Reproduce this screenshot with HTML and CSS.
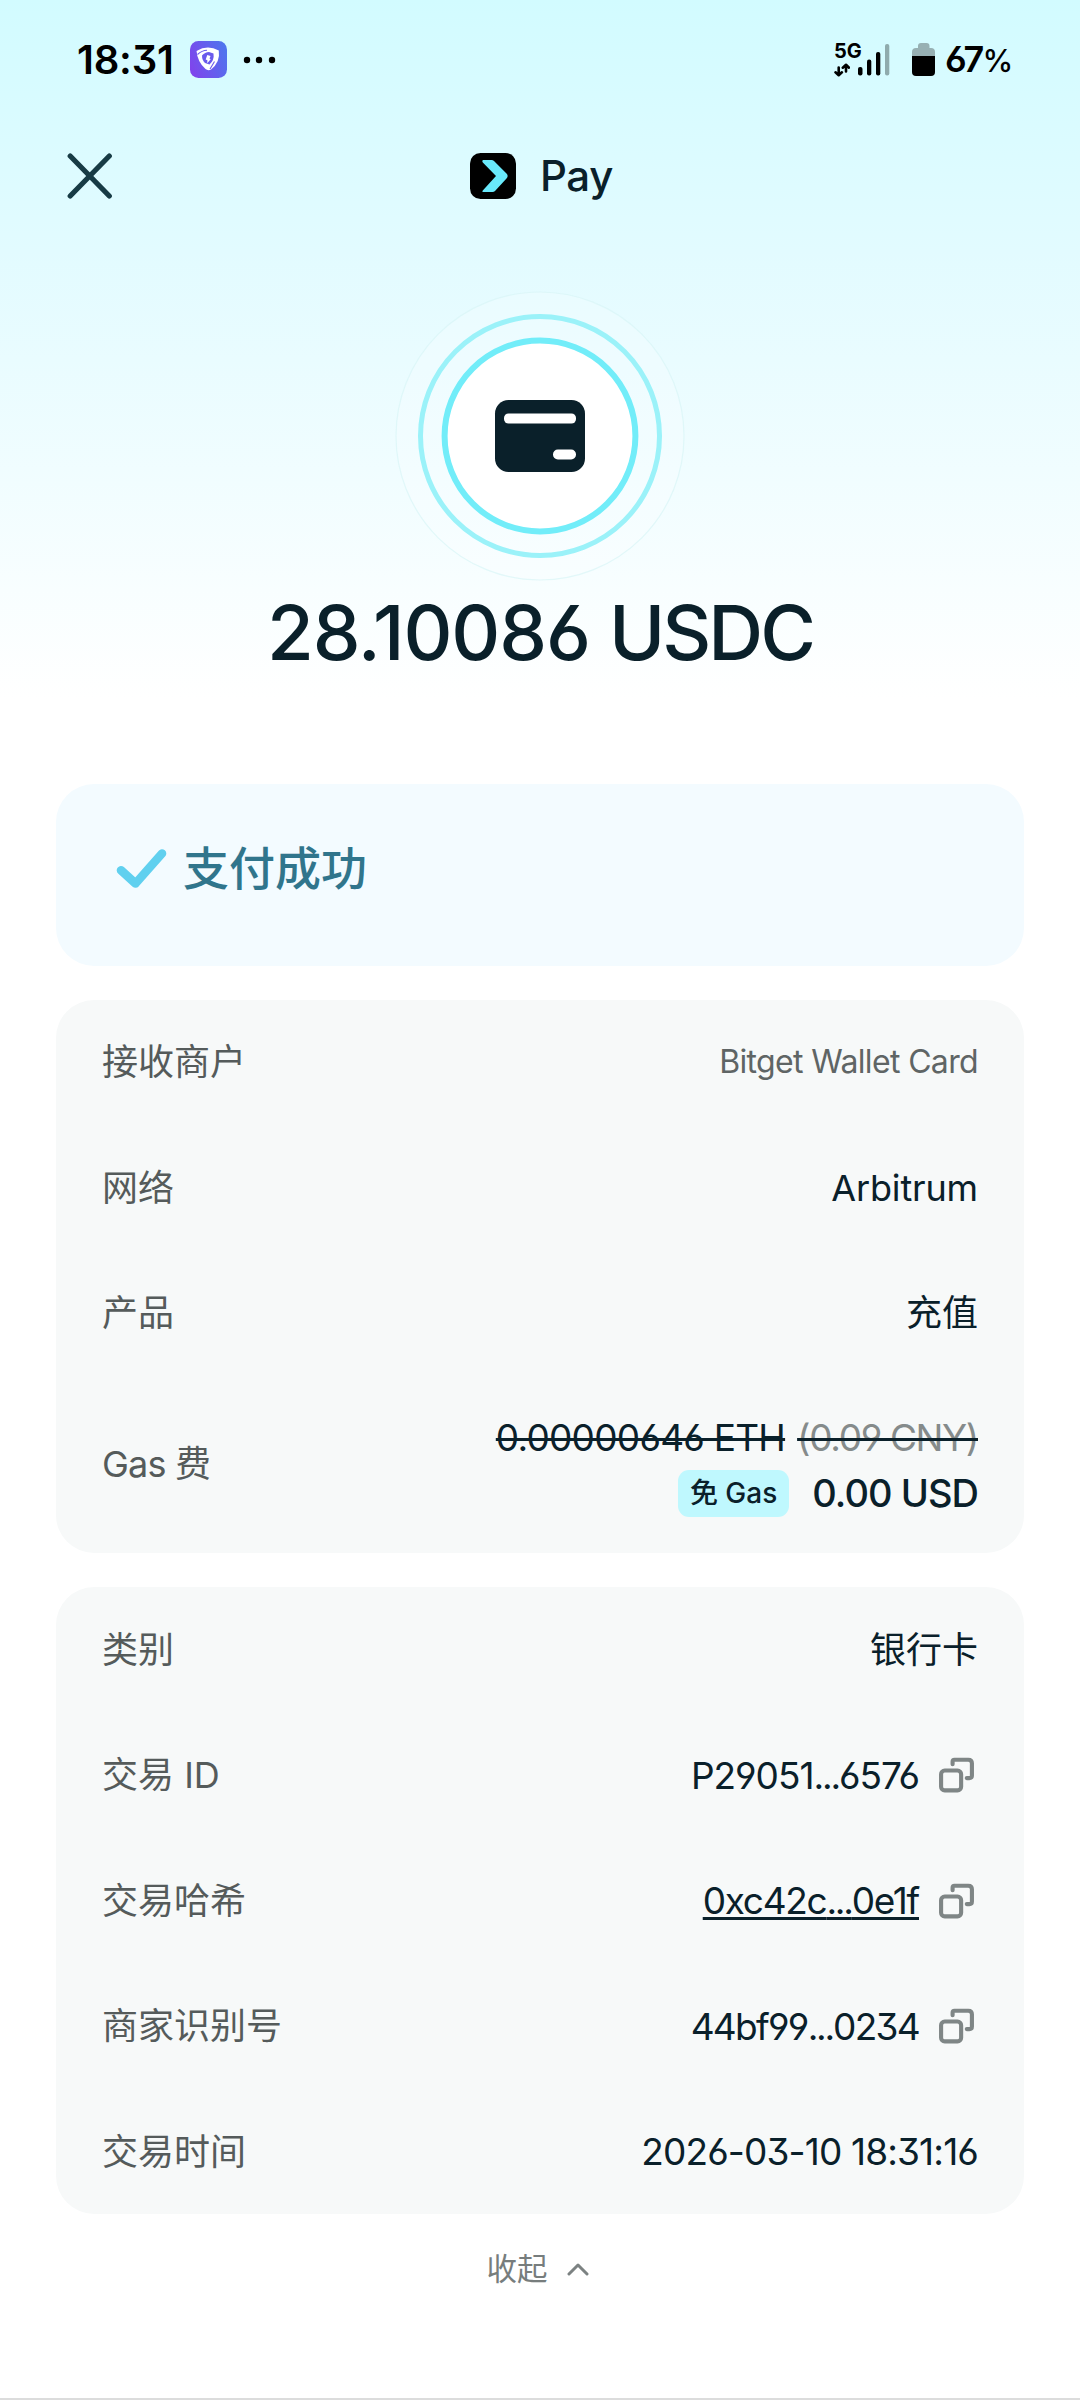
FILE: index.html
```html
<!DOCTYPE html>
<html lang="zh-CN">
<head>
<meta charset="utf-8">
<title>Pay</title>
<link rel="stylesheet" href="styles.css">
</head>
<body>
<svg class="defs" width="0" height="0" aria-hidden="true">
  <symbol id="copy" viewBox="0 0 36 36" fill="none" stroke="#7f8686" stroke-width="4" stroke-linecap="round" stroke-linejoin="round">
    <rect x="3" y="13.2" width="19.5" height="19.3" rx="3.5"/>
    <path d="M14.2 7V4.5Q14.2 2.7 16 2.7H29.5Q33 2.7 33 6.2V18Q33 20.5 30.5 20.5H28"/>
  </symbol>
</svg>
<div class="screen">
  <div class="statusbar">
    <div class="status-left">
      <span class="time">18:31</span>
      <svg class="app-badge" width="37" height="37" viewBox="0 0 37 37">
        <defs><linearGradient id="purple" x1="0" y1=".7" x2="1" y2=".3"><stop offset="0" stop-color="#7f45ec"/><stop offset="1" stop-color="#4f74ee"/></linearGradient></defs>
        <rect width="37" height="37" rx="8.5" fill="url(#purple)"/>
        <path d="M6.500 10Q17.500 3.500 28.800 9.500Q30.500 21 21 28.500Q18 30 15.500 28Q7.500 21 6.500 10Z" fill="#fff"/>
        <path d="M12 14.500Q15 11 19 11L23.500 12.500Q24.500 19 19.500 23.500L15 22Q12 19 12 14.500Z" fill="#6a5aec"/>
        <path d="M17.300 14l3.200 1-1 2.500 1.200.7-3.500 4 .2-3-1.700-.7z" fill="#fff"/>
        <path d="M7.500 13.500Q12 9.500 17 9.300M20 28L24.500 20.500" fill="none" stroke="#6b5bed" stroke-width="1.100"/>
      </svg>
      <svg class="more" width="34" height="8" viewBox="0 0 34 8"><circle cx="4" cy="4" r="3.200"/><circle cx="16" cy="4" r="3.200"/><circle cx="29" cy="4" r="3.200"/></svg>
    </div>
    <div class="status-right">
      <div class="network">
        <span class="net-type">5G</span>
        <svg width="16" height="14" viewBox="0 0 16 14" fill="none" stroke="#000" stroke-width="2.600" stroke-linecap="round" stroke-linejoin="round"><path d="M4.700 4.500V12M1.500 9.300L4.700 12.200L7.900 9.300M12 8.500V2M8.800 4.700L12 1.800L15 4.700"/></svg>
      </div>
      <svg class="signal" width="32" height="32" viewBox="0 0 32 32"><rect y="23" width="4.500" height="8.500" rx="2"/><rect x="9" y="15.500" width="4.300" height="16" rx="2"/><rect x="18" y="8" width="4.300" height="23.500" rx="2"/><rect x="27" width="4.300" height="31.500" rx="2" fill="#8fabad"/></svg>
      <svg class="battery" width="23" height="34" viewBox="0 0 23 34"><path d="M6 5V3Q6 0 9 0H14.500Q17.500 0 17.500 3V5H19Q23 5 23 9V14H0V9Q0 5 4 5Z" fill="#97b0b3"/><path d="M0 13H23V29Q23 33 19 33H4Q0 33 0 29Z"/></svg>
      <span class="level">67<small>%</small></span>
    </div>
  </div>

  <div class="titlebar">
    <svg class="close" width="46" height="46" viewBox="0 0 46 46" fill="none" stroke="#173b45" stroke-width="5.200" stroke-linecap="round"><path d="M3.200 3L42.300 43M42.300 3L3.200 43"/></svg>
    <div class="brand">
      <svg width="46" height="46" viewBox="0 0 46 46"><rect width="46" height="46" rx="10.500"/><path d="M13 7H21.500Q23 7 24 8L36.500 20.500Q38.800 23 36.500 25.500L25 38Q24 39 22.500 39H13.500Q11.500 39 13 37.200L26 23L12.800 9.500Q11.500 7.500 13 7Z" fill="#69e9fb"/></svg>
      <span>Pay</span>
    </div>
  </div>

  <div class="hero">
    <svg width="290" height="290" viewBox="-145 -145 290 290">
      <circle r="144" fill="#fff" fill-opacity=".22" stroke="#d9f5f7" stroke-opacity=".7" stroke-width="1.200"/>
      <circle r="119.500" fill="none" stroke="#9bf2f9" stroke-width="5"/>
      <circle r="95.400" fill="#fff" stroke="#72edf9" stroke-width="6"/>
      <rect x="-45" y="-36" width="90" height="72" rx="13.500" fill="#0a202a"/>
      <rect x="-36" y="-22.500" width="72" height="10" rx="4.500" fill="#fff"/>
      <rect x="13" y="13.500" width="23" height="10" rx="4.800" fill="#fff"/>
    </svg>
    <div class="amount">28.10086 <span class="unit">USDC</span></div>
  </div>

  <div class="cards">
    <div class="card success">
      <svg width="52" height="42" viewBox="0 0 52 42" fill="none" stroke="#60d0ef" stroke-width="8.600" stroke-linecap="round" stroke-linejoin="round"><path d="M5 22.300L19.500 35.500L46 5.500"/></svg>
      <span>支付成功</span>
    </div>

    <div class="card">
      <div class="row first"><span class="label">接收商户</span><span class="value merchant">Bitget Wallet Card</span></div>
      <div class="row"><span class="label">网络</span><span class="value word">Arbitrum</span></div>
      <div class="row"><span class="label">产品</span><span class="value">充值</span></div>
      <div class="row gas">
        <span class="label gas-label">Gas 费</span>
        <div class="fees">
          <div class="old-fee"><span class="struck eth">0.00000646 ETH</span><span class="struck cny"><span>(0.09 CNY)</span></span></div>
          <div class="new-fee"><span class="tag">免 Gas</span><span class="usd">0.00 USD</span></div>
        </div>
      </div>
    </div>

    <div class="card details">
      <div class="row"><span class="label">类别</span><span class="value">银行卡</span></div>
      <div class="row"><span class="label">交易 ID</span><span class="value copyable"><span class="id">P29051<span class="dots">...</span>6576</span><svg width="37" height="37"><use href="#copy"/></svg></span></div>
      <div class="row"><span class="label">交易哈希</span><span class="value copyable"><span class="hash">0xc42c<span class="dots">...</span>0e1f</span><svg width="37" height="37"><use href="#copy"/></svg></span></div>
      <div class="row"><span class="label">商家识别号</span><span class="value copyable"><span class="mid">44bf99<span class="dots">...</span>0234</span><svg width="37" height="37"><use href="#copy"/></svg></span></div>
      <div class="row"><span class="label">交易时间</span><span class="value date">2026-03-10 18:31:16</span></div>
    </div>
  </div>

  <div class="collapse">
    <span>收起</span>
    <svg width="22" height="13" viewBox="0 0 22 13" fill="none" stroke="#7c8282" stroke-width="3" stroke-linecap="round" stroke-linejoin="round"><path d="M2 11L11 2L20 11"/></svg>
  </div>
</div>
</body>
</html>
```
FILE: styles.css
```css
* { box-sizing: border-box; }
body {
  margin: 0;
  background: #fff;
  font-family: Inter, "Noto Sans CJK SC", sans-serif;
  font-feature-settings: "cv03", "cv04", "cv09";
  color: #0a202a;
}
svg { display: block; flex: none; }
.defs { position: absolute; }
.screen {
  width: 1080px;
  height: 2400px;
  overflow: hidden;
  display: flex;
  flex-direction: column;
  background: linear-gradient(#d2fbff 0, #e2fbff 250px, #fff 700px);
  border-bottom: 2px solid #dcdcdc;
}
.statusbar {
  height: 119px;
  padding: 0 68px 0 77px;
  display: flex;
  justify-content: space-between;
  align-items: center;
  color: #000;
}
.status-left, .status-right { display: flex; align-items: center; }
.time { width: 113px; font-size: 40px; font-weight: 600; line-height: 48px; letter-spacing: -.2px; white-space: nowrap; }
.more { margin-left: 16px; }
.network { width: 24px; height: 34px; display: flex; flex-direction: column; justify-content: space-between; }
.net-type { font-size: 20px; font-weight: 700; line-height: 16px; }
.signal { margin-right: 22px; }
.battery { margin-right: 10px; }
.level { display: block; width: 67px; font-size: 36px; font-weight: 600; line-height: 44px; white-space: nowrap; letter-spacing: -1.8px; }
.level small { font-size: 31px; font-weight: 500; }
.titlebar {
  height: 113px;
  padding: 0 66px 0 67px;
  display: grid;
  grid-template-columns: 1fr auto 1fr;
  align-items: center;
}
.brand { display: flex; align-items: center; gap: 24px; padding-left: 2px; font-size: 42px; font-weight: 500; line-height: 50px; letter-spacing: -.3px; }
.hero { height: 552px; padding-top: 59px; display: flex; flex-direction: column; align-items: center; }
.amount { margin-top: 6px; font-size: 76px; font-weight: 500; line-height: 90px; letter-spacing: -1.150px; white-space: nowrap; }
.unit { letter-spacing: -3px; }
.cards { padding: 0 56px; display: flex; flex-direction: column; gap: 34px; }
.card { border-radius: 38px; background: #f7f9f9; padding: 0 46px; }
.success {
  height: 182px;
  padding: 64px 60px 0;
  display: flex;
  align-items: flex-start;
  gap: 15px;
  background: #f3fbff;
  color: #30758c;
  font-size: 46px;
  font-weight: 500;
  line-height: 40px;
}
.row { height: 125.300px; display: flex; justify-content: space-between; align-items: center; font-size: 36px; line-height: 44px; white-space: nowrap; }
.first { padding-bottom: 2px; }
.details .row { height: 125.500px; }
.label { color: #555b5b; }
.gas-label { letter-spacing: -.8px; }
.merchant { font-size: 32px; color: #5f6565; letter-spacing: -.650px; }
.word { letter-spacing: -.150px; }
.gas { height: 177px; }
.fees { display: flex; flex-direction: column; align-items: flex-end; gap: 8px; padding-top: 3px; }
.old-fee, .new-fee { display: flex; align-items: center; height: 47px; }
.old-fee { gap: 12px; font-size: 37px; }
.struck { text-decoration: line-through 3px #0a202a; }
.eth { letter-spacing: -.750px; }
.cny { letter-spacing: -1.350px; }
.cny > span { color: #858b8b; }
.new-fee { gap: 23px; }
.tag { height: 47px; padding: 0 12px; border-radius: 11px; background: #bff8fe; font-size: 28px; font-weight: 500; line-height: 46px; }
.usd { font-size: 38px; font-weight: 500; letter-spacing: -.950px; }
.copyable { display: flex; align-items: center; gap: 19px; padding: 1px 3px 0 0; font-size: 37px; }
.id { letter-spacing: -1px; }
.hash { letter-spacing: -1.300px; }
.mid { letter-spacing: -1.700px; }
.dots { letter-spacing: -2.200px; }
.hash { text-decoration: underline 3px; text-underline-offset: 3px; text-decoration-skip-ink: none; }
.date { padding-top: 1px; font-size: 37px; letter-spacing: -.850px; }
.collapse { padding: 36px 5px 0 0; display: flex; justify-content: center; align-items: center; gap: 19px; font-size: 30.500px; line-height: 38px; color: #777d7d; }
```
